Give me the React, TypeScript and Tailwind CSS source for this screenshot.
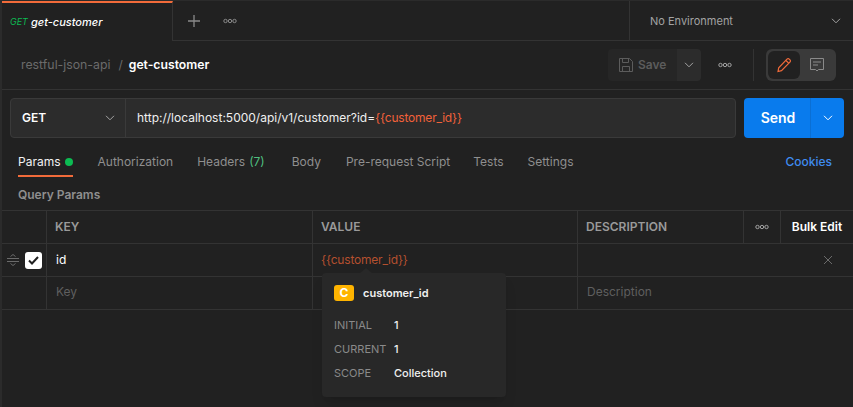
import React from "react";

function Dots({ className = "" }: { className?: string }) {
  return (
    <svg width="14" height="6" viewBox="0 0 14 6" fill="none" stroke="currentColor" strokeWidth="1" className={className}>
      <circle cx="2.5" cy="3" r="1.7" />
      <circle cx="7" cy="3" r="1.7" />
      <circle cx="11.5" cy="3" r="1.7" />
    </svg>
  );
}

function Chevron({ className = "" }: { className?: string }) {
  return (
    <svg width="10" height="6" viewBox="0 0 10 6" fill="none" stroke="currentColor" strokeWidth="1" className={className}>
      <path d="M1 .8 5 4.8 9 .8" />
    </svg>
  );
}

function TabLink({ children, active }: { children: React.ReactNode; active?: boolean }) {
  return (
    <div className={`relative flex h-[30px] items-center whitespace-nowrap ${active ? "text-[#f2f2f2]" : "text-[#8f8f8f]"}`}>
      {children}
    </div>
  );
}

function PopRow({ label, value }: { label: string; value: string }) {
  return (
    <div className="flex h-6 items-center">
      <span className="w-[60px] text-[11px] text-[#8a8a8a]">{label}</span>
      <span className="text-[11px] font-medium text-[#f0f0f0]">{value}</span>
    </div>
  );
}

export default function App() {
  return (
    <div className="relative h-[407px] w-[853px] overflow-hidden border-t border-l-2 border-[#2b2b2b] bg-[#212121] font-['Inter',sans-serif] text-xs text-[#f0f0f0]">
      {/* request tabs */}
      <div className="flex h-10">
        <div className="flex w-[171px] items-center gap-[3px] border-t-2 border-r border-t-[#f26b3a] border-r-[#333] pl-2 italic">
          <span className="text-[9px] text-[#0cbb52]">GET</span>
          <span className="text-[11px] font-medium text-white">get-customer</span>
        </div>
        <div className="flex flex-1 items-center border-b border-[#333]">
          <svg width="14" height="14" viewBox="0 0 14 14" stroke="#8a8a8a" strokeWidth="1.3" className="ml-[14px]">
            <path d="M7 1v12M1 7h12" />
          </svg>
          <Dots className="ml-[22px] text-[#8a8a8a]" />
          <div className="ml-auto flex h-full w-[224px] items-center border-l border-[#333] pl-5 text-[#a3a3a3]">
            <span className="pt-[1px] text-[11px]">No Environment</span>
            <Chevron className="ml-auto mr-3 text-[#a3a3a3]" />
          </div>
        </div>
      </div>

      {/* breadcrumb and save */}
      <div className="flex h-[49px] items-center border-b border-[#333] pl-[19px]">
        <span className="text-[12.3px] text-[#6b6b6b]">restful-json-api</span>
        <span className="ml-2 mr-[6px] text-[#6b6b6b]">/</span>
        <span className="text-[12.2px] font-semibold text-white">get-customer</span>
        <div className="ml-auto flex h-8 w-[93px] overflow-hidden rounded">
          <div className="flex w-[69px] items-center gap-[5px] bg-[#262626] pl-[11px] font-semibold text-[#5c5c5c]">
            <svg width="14" height="14" viewBox="0 0 14 14" fill="none" stroke="#5c5c5c" strokeWidth="1">
              <path d="M.5.5h10l3 3v10H.5zM3.500.5v4h6v-4M3.500 13.500v-5h7v5" />
            </svg>
            Save
          </div>
          <div className="flex flex-1 items-center justify-center bg-[#2c2c2c]">
            <Chevron className="text-[#a3a3a3]" />
          </div>
        </div>
        <Dots className="ml-[17px] text-[#a3a3a3]" />
        <div className="ml-[21px] h-8 w-px bg-[#333]" />
        <div className="ml-3 mr-[17px] flex h-8 w-[70px] items-center rounded-md bg-[#3a3a3a] pl-[2px]">
          <div className="flex h-7 w-8 items-center justify-center rounded-md bg-[#212121]">
            <svg width="16" height="16" viewBox="0 0 16 16" fill="none" stroke="#f26b3a" strokeWidth="1.2">
              <path d="M2 14.500l.7-3.600L11 2.200c.7-.7 1.600-.7 2.200-.1l.8.8c.6.6.6 1.500-.1 2.200l-8.400 8.600zM10 3.500l2.700 2.700" />
            </svg>
          </div>
          <svg width="16" height="16" viewBox="0 0 16 16" fill="none" stroke="#8a8a8a" strokeWidth="1" className="ml-[9px]">
            <path d="M1.500 1.500h13v11H9.500L8 14l-1.500-1.500h-5zM4 5h8M4 8h5" />
          </svg>
        </div>
      </div>

      {/* url bar */}
      <div className="mt-2 flex h-10 gap-2 pl-2 pr-[9px]">
        <div className="flex flex-1 rounded border border-[#3a3a3a] bg-[#2c2c2c]">
          <div className="flex w-[115px] items-center border-r border-[#3a3a3a] pl-[11px] font-semibold text-white">
            GET
            <Chevron className="ml-auto mr-[10px] text-[#a3a3a3]" />
          </div>
          <div className="flex items-center pl-[11px] whitespace-nowrap">
            http://localhost:5000/api/v1/customer?id=<span className="tracking-[-0.2px] text-[#f2613a]">{"{{customer_id}}"}</span>
          </div>
        </div>
        <div className="flex w-[100px] rounded bg-[#097bed] text-white">
          <div className="flex w-[67px] items-center justify-center border-r border-[#0a6fd4] pl-[2px] text-sm font-semibold">Send</div>
          <div className="flex flex-1 items-center justify-center">
            <Chevron />
          </div>
        </div>
      </div>

      {/* tabs */}
      <div className="relative mt-[9px] flex items-center pl-4 pr-[21px]">
        <TabLink active>
          Params
          <span className="ml-1 h-2 w-2 rounded-full bg-[#0cbb52]" />
          <span className="absolute bottom-0 left-0 right-0 h-[2px] bg-[#f26b3a]" />
        </TabLink>
        <div className="ml-[25px]"><TabLink>Authorization</TabLink></div>
        <div className="ml-6">
          <TabLink>
            Headers <span className="ml-1 text-[#4fbf7f]">(7)</span>
          </TabLink>
        </div>
        <div className="ml-[27px]"><TabLink>Body</TabLink></div>
        <div className="ml-[25px]"><TabLink>Pre-request Script</TabLink></div>
        <div className="ml-[23px]"><TabLink>Tests</TabLink></div>
        <div className="ml-6"><TabLink>Settings</TabLink></div>
        <span className="ml-auto font-medium text-[#3f8cf0]">Cookies</span>
      </div>

      <div className="mt-[10px] h-[23px] pl-4 font-semibold text-[#8f8f8f]">Query Params</div>

      {/* params table */}
      <div className="grid grid-cols-[45px_266px_265px_166px_37px_1fr] border-t border-[#333] [&>div]:border-b [&>div]:border-[#333]">
        <div className="h-[33px] border-r border-r-[#333]" />
        <div className="flex items-center border-r border-r-[#333] pl-2 font-semibold text-[#9a9a9a]">KEY</div>
        <div className="flex items-center border-r border-r-[#333] pl-2 font-semibold text-[#9a9a9a]">VALUE</div>
        <div className="flex items-center border-r border-r-[#333] pl-2 font-semibold text-[#9a9a9a]">DESCRIPTION</div>
        <div className="flex items-center justify-center border-r border-r-[#333]">
          <Dots className="text-[#a3a3a3]" />
        </div>
        <div className="flex items-center justify-center font-semibold text-white">Bulk Edit</div>

        <div className="flex h-[33px] items-center gap-[6px] border-r border-r-[#333] pl-[5px]">
          <svg width="12" height="12" viewBox="0 0 12 12" fill="none" stroke="#6b6b6b" strokeWidth="1">
            <path d="M0 4.500h12M0 7.500h12M3.500 2.500 6 .5l2.500 2M3.500 9.500 6 11.500l2.500-2" />
          </svg>
          <div className="flex h-[17px] w-[17px] items-center justify-center rounded-[3px] bg-white">
            <svg width="11" height="9" viewBox="0 0 11 9" fill="none" stroke="#212121" strokeWidth="2">
              <path d="M1 4.500 4 7.500 10 1" />
            </svg>
          </div>
        </div>
        <div className="flex items-center border-r border-r-[#333] pl-[9px] text-white">id</div>
        <div className="flex items-center border-r border-r-[#333] pl-2 tracking-[-0.2px] text-[#b5502f]">{"{{customer_id}}"}</div>
        <div className="col-span-3 flex items-center justify-end pr-[21px]">
          <svg width="8" height="8" viewBox="0 0 8 8" stroke="#6b6b6b" strokeWidth="1">
            <path d="M0 0l8 8M8 0 0 8" />
          </svg>
        </div>

        <div className="h-[33px] border-r border-r-[#333]" />
        <div className="flex items-center border-r border-r-[#333] pb-[2px] pl-[9px] text-[#5f5f5f]">Key</div>
        <div className="border-r border-r-[#333]" />
        <div className="col-span-3 flex items-center pb-[2px] pl-[9px] text-[#5f5f5f]">Description</div>
      </div>

      {/* variable popover */}
      <div className="absolute left-[320px] top-[272px] h-[124px] w-[184px] rounded bg-[#282828] px-3 pt-3 shadow-lg">
        <div className="absolute -top-[5px] left-[38px] h-0 w-0 border-x-[6px] border-b-[5px] border-x-transparent border-b-[#282828]" />
        <div className="flex items-center gap-[9px]">
          <span className="flex h-4 w-5 items-center justify-center rounded-[3px] bg-[#ffb400] text-xs font-bold text-white">C</span>
          <span className="text-[11px] font-semibold text-[#f0f0f0]">customer_id</span>
        </div>
        <div className="mt-3">
          <PopRow label="INITIAL" value="1" />
          <PopRow label="CURRENT" value="1" />
          <PopRow label="SCOPE" value="Collection" />
        </div>
      </div>
    </div>
  );
}
